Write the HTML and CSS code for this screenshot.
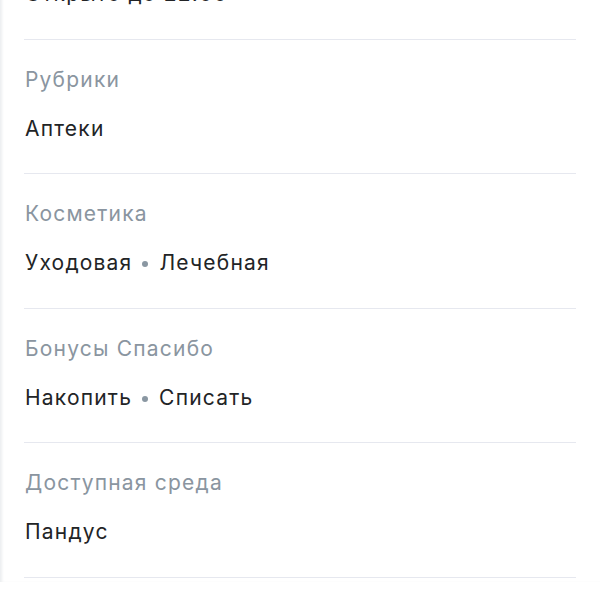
FILE: index.html
```html
<!DOCTYPE html>
<html lang="ru">
<head>
<meta charset="utf-8">
<link rel="stylesheet" href="styles.css">
</head>
<body>
<div class="page">
  <div class="list">
    <div class="item item-first">
      <div class="value">Открыто до 22:00</div>
    </div>
    <div class="item">
      <div class="label">Рубрики</div>
      <div class="value">Аптеки</div>
    </div>
    <div class="item">
      <div class="label">Косметика</div>
      <div class="value">Уходовая<span class="dot"></span>Лечебная</div>
    </div>
    <div class="item">
      <div class="label">Бонусы Спасибо</div>
      <div class="value">Накопить<span class="dot"></span>Списать</div>
    </div>
    <div class="item">
      <div class="label">Доступная среда</div>
      <div class="value">Пандус</div>
    </div>
    <div class="item item-last"></div>
  </div>
</div>
</body>
</html>
```
FILE: styles.css
```css
html, body {
  margin: 0;
  padding: 0;
  background: #ffffff;
  overflow: hidden;
}
body {
  font-family: Inter, "Noto Sans", sans-serif;
  color: #222426;
}
.page {
  height: 600px;
  box-shadow: inset 3px 0 3px -1px #eceef0;
  padding: 0 24px;
}
.list {
  margin-top: -18px;
}
.item {
  border-bottom: 1px solid #e6e8ef;
  padding: 28px 0 32.6px;
  display: flex;
  flex-direction: column;
  gap: 25px;
}
.item-first {
  padding-top: 0;
}
.item-last {
  border-bottom: none;
}
.label {
  font-size: 21px;
  line-height: 24px;
  height: 24px;
  letter-spacing: 1.2px;
  color: #8a95a0;
  padding-left: 1px;
}
.value {
  font-size: 21px;
  line-height: 24px;
  height: 24px;
  letter-spacing: 1.2px;
  color: #222426;
  padding-left: 1px;
  display: flex;
  align-items: center;
}
.dot {
  width: 6px;
  height: 6px;
  border-radius: 50%;
  background: #8a97a2;
  margin: 2px 11px 0 10px;
}
```
